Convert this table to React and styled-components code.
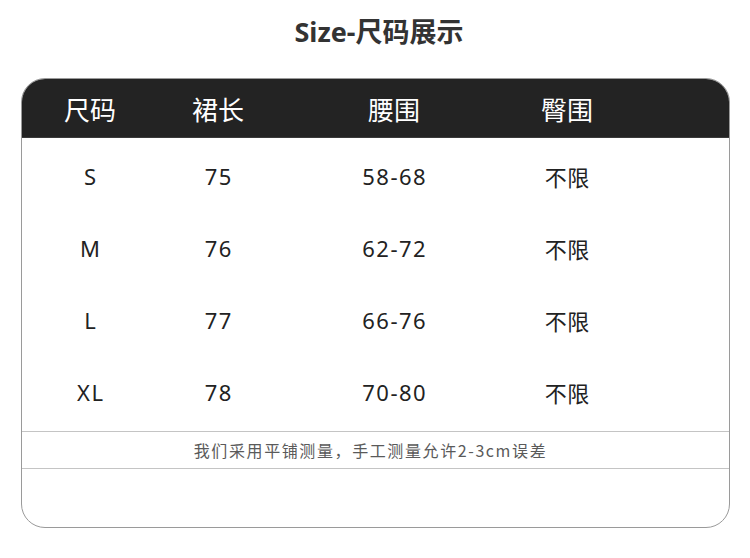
import React from "react";
import styled, { createGlobalStyle } from "styled-components";

const Global = createGlobalStyle`
  html, body { margin: 0; padding: 0; background: #fff; }
  body { font-family: "Noto Sans", "Noto Sans CJK SC", sans-serif; }
`;

const Page = styled.div`
  width: 750px;
  height: 558px;
  background: #fff;
  display: flex;
  flex-direction: column;
  align-items: flex-start;
  overflow: hidden;
`;

const Title = styled.h1`
  margin: 0;
  width: 758px;
  height: 78px;
  display: flex;
  align-items: center;
  justify-content: center;
  padding-bottom: 17px;
  box-sizing: border-box;
  font-family: "Noto Sans", "Noto Sans CJK SC", sans-serif;
  font-size: 27px;
  font-weight: 700;
  color: #333;
`;

const Card = styled.div`
  margin-left: 21px;
  width: 709px;
  height: 450px;
  box-sizing: border-box;
  border: 1.5px solid #9a9a9a;
  border-radius: 24px;
  overflow: hidden;
  display: flex;
  flex-direction: column;
`;

const cols = "136px 120px 232px 114px 1fr";

const Header = styled.div`
  height: 60px;
  background: #232323;
  display: grid;
  grid-template-columns: ${cols};
  align-items: center;
  box-shadow: inset 0 -1px 0 #3a3a3a;
  margin: -1.5px -1.5px 0;
  padding: 0 1.5px 0;
  flex-shrink: 0;
`;

const HeadCell = styled.div`
  text-align: center;
  color: #fff;
  font-family: "Noto Sans CJK SC", sans-serif;
  font-size: 26px;
  font-weight: 400;
  padding-top: 2px;
`;

const Body = styled.div`
  padding-top: 2px;
  display: flex;
  flex-direction: column;
`;

const Row = styled.div`
  height: 72px;
  display: grid;
  grid-template-columns: ${cols};
  align-items: center;
`;

const Cell = styled.div`
  text-align: center;
  color: #222;
  font-family: "Noto Sans", "Noto Sans CJK SC", sans-serif;
  font-size: 22px;
  letter-spacing: ${(p) => (p.$cjk ? "0.5px" : "1.5px")};
  text-indent: ${(p) => (p.$cjk ? "0.5px" : "1.5px")};
`;

const Note = styled.div`
  margin-top: 3px;
  height: 38px;
  box-sizing: border-box;
  border-top: 1.5px solid #c4c4c4;
  border-bottom: 1.5px solid #c4c4c4;
  display: flex;
  align-items: center;
  justify-content: center;
  padding-right: 10px;
  color: #5a5a5a;
  font-family: "Noto Sans CJK SC", sans-serif;
  font-size: 16px;
  letter-spacing: 1.6px;
`;

const rows = [
  ["S", "75", "58-68", "不限"],
  ["M", "76", "62-72", "不限"],
  ["L", "77", "66-76", "不限"],
  ["XL", "78", "70-80", "不限"],
];

export default function App() {
  return (
    <Page>
      <Global />
      <Title>Size-尺码展示</Title>
      <Card>
        <Header>
          <HeadCell>尺码</HeadCell>
          <HeadCell>裙长</HeadCell>
          <HeadCell>腰围</HeadCell>
          <HeadCell>臀围</HeadCell>
        </Header>
        <Body>
          {rows.map((r) => (
            <Row key={r[0]}>
              {r.map((c, i) => (
                <Cell key={i} $cjk={i === 3}>
                  {c}
                </Cell>
              ))}
            </Row>
          ))}
        </Body>
        <Note>我们采用平铺测量，手工测量允许2-3cm误差</Note>
      </Card>
    </Page>
  );
}
